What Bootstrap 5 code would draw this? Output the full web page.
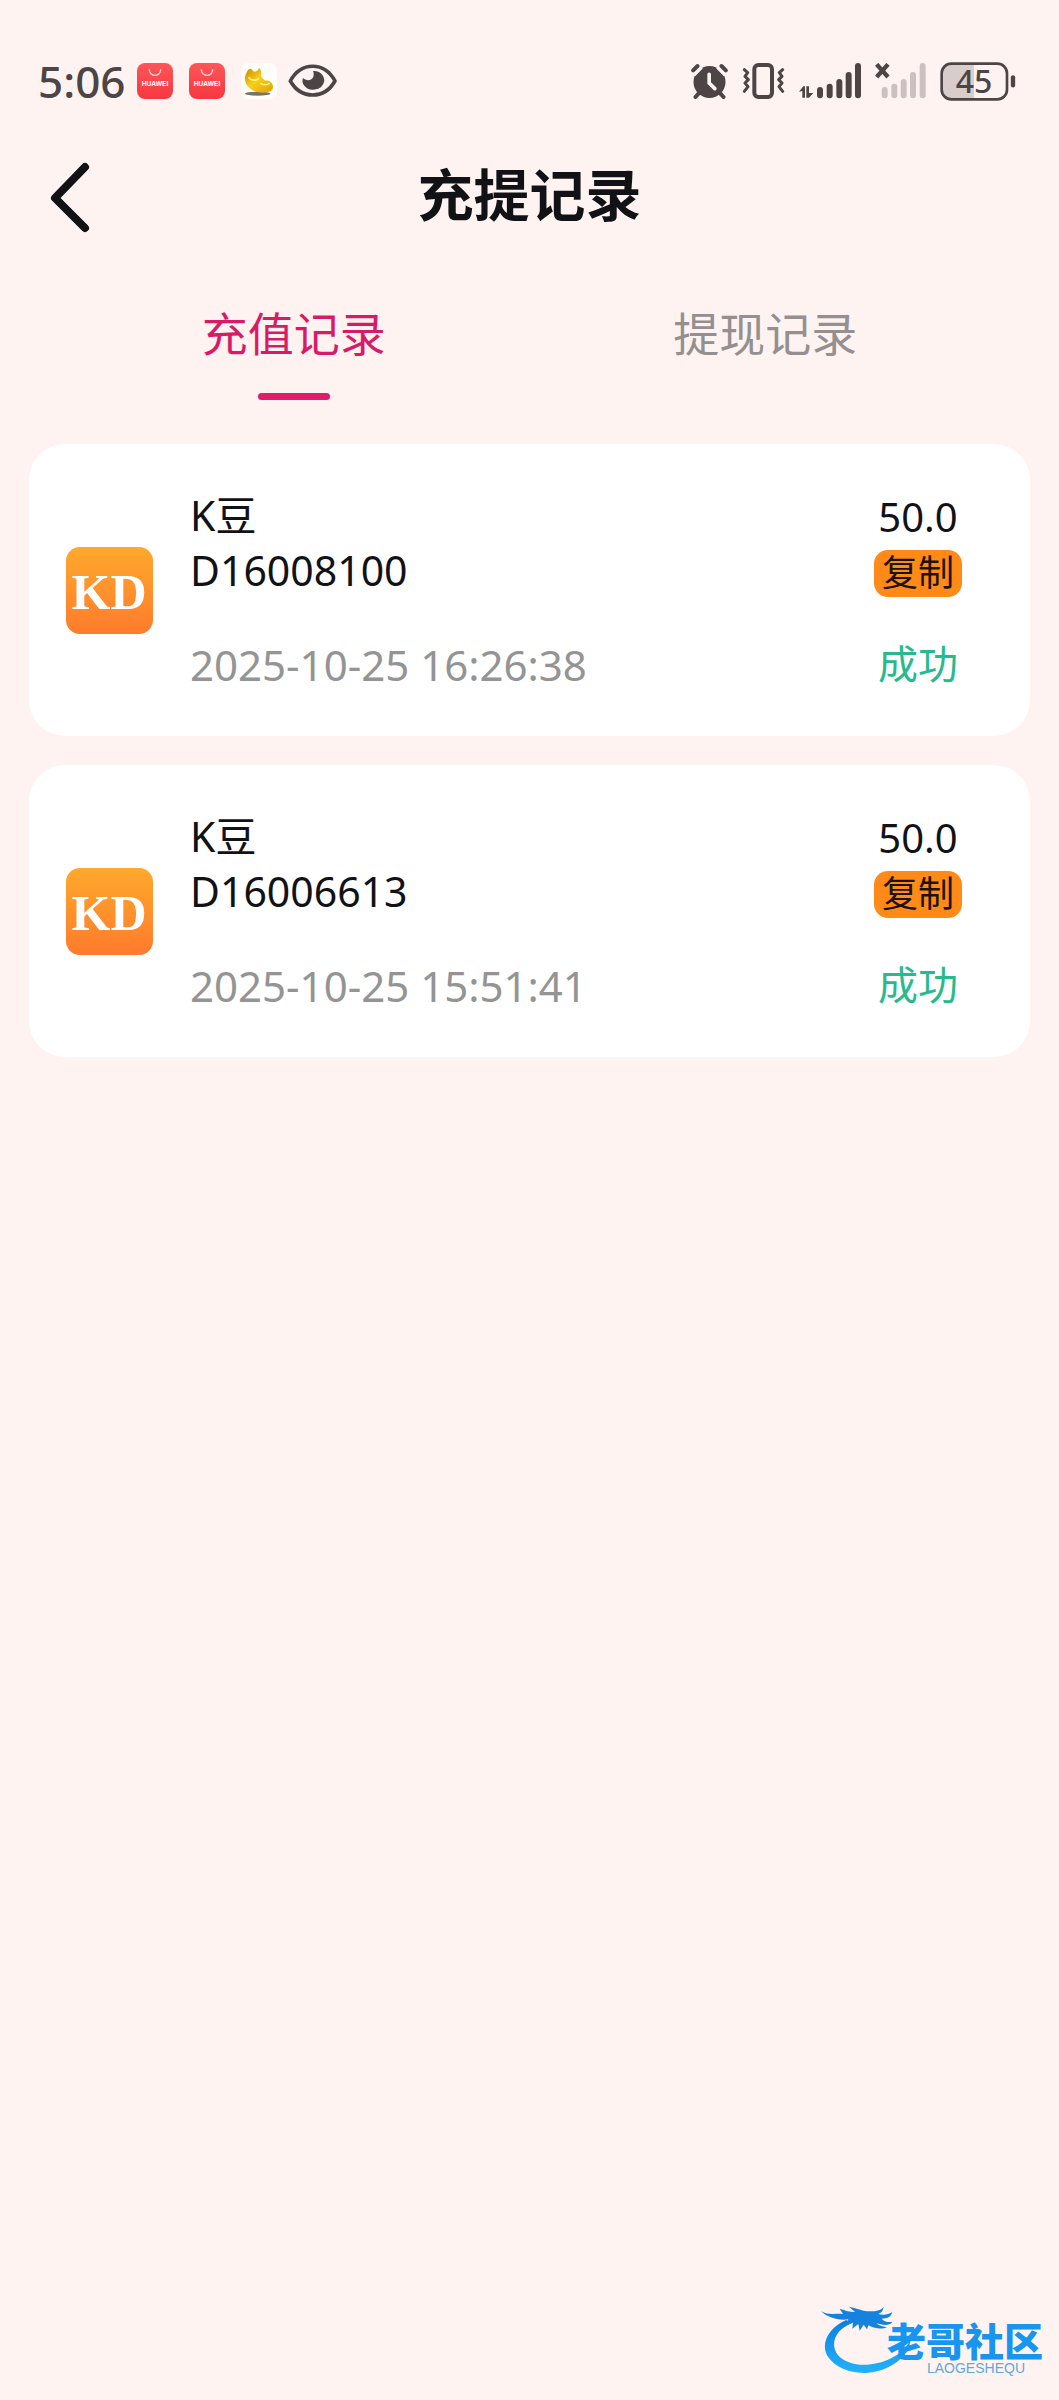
<!DOCTYPE html>
<html lang="zh-CN">
<head>
<meta charset="utf-8">
<meta name="viewport" content="width=device-width, initial-scale=1">
<title>充提记录</title>
<link href="https://cdn.jsdelivr.net/npm/bootstrap@5.3.0/dist/css/bootstrap.min.css" rel="stylesheet">
<style>
body{background:#fff3f2;color:#111216;font-family:"Noto Sans","Noto Sans CJK SC",sans-serif;font-size:41px;line-height:55px}
svg{display:block;flex:none}
.statusbar{padding:57px 43px 0 38px;height:105px;color:#4d4545}
.clock{font-size:44px;font-weight:500;line-height:48px;margin-right:12px}
.app-ico{margin-right:16px}
.signals{gap:14px}
.level{font-size:32px;font-weight:500;line-height:38px;width:68px}
.topbar{height:184px;padding:0 48px}
.topbar h1{font-size:56px;line-height:64px;padding-bottom:10px;font-weight:700;font-family:"Noto Sans CJK SC",sans-serif}
.back{width:44px;color:#111216}
.tabs{padding:0 58px;margin-bottom:44px}
.tabs .nav-link{padding:0;color:#949090;font:400 46px/84px "Noto Sans CJK SC",sans-serif}
.tabs .nav-link::after{content:"";display:block;width:72px;height:7px;margin:20px auto 0;border-radius:4px}
.tabs .nav-link.active{color:#d81b66}
.tabs .nav-link.active::after{background:#e01b6c}
.records{gap:29px;padding:0 29px}
.record{border:0;border-radius:36px;padding:44px 37px}
.record-body{gap:37px}
.when{color:#949494;margin-top:39px;font-size:42px}
.side{margin-right:31px}
.amount{font-size:40px}
.copy{display:block;height:47px;margin:6px 0 2px;padding:0 8px;border:0;border-radius:14px;background:#ff8a17;color:#1c1208;font-family:"Noto Sans CJK SC",sans-serif;font-size:36px;line-height:40px}
.copy span{display:block;height:47px}
.state{color:#27ba8d;margin-top:39px;font-size:40px}
.brand{padding:0 16px 24px 0}
.brand-text{margin-left:-24px;color:#1795ef;line-height:42px;font-size:39px;font-weight:900;font-family:"Noto Sans CJK SC",sans-serif}
.brand-sub{color:#5fa9d6;font:400 14px/16px "Liberation Sans",sans-serif;padding-right:18px}
</style>
</head>
<body>
<svg width="0" height="0" class="position-absolute" aria-hidden="true">
  <defs>
    <linearGradient id="red" x2="0" y2="1"><stop stop-color="#ff5659"/><stop offset="1" stop-color="#f5383f"/></linearGradient>
    <linearGradient id="orange" x2="0" y2="1"><stop stop-color="#ffa92d"/><stop offset="1" stop-color="#ff7b2c"/></linearGradient>
    <linearGradient id="gold" x2="1" y2="1"><stop stop-color="#c98a00"/><stop offset=".45" stop-color="#f6cf1c"/><stop offset="1" stop-color="#e0a300"/></linearGradient>
    <linearGradient id="blue" x2="0" y2="1"><stop stop-color="#0d7fe0"/><stop offset="1" stop-color="#22b2fb"/></linearGradient>
    <symbol id="store" viewBox="0 0 108 108"><rect width="108" height="108" rx="24" fill="url(#red)"/><path d="M37 20a17 17 0 0 0 34 0" fill="none" stroke="#ffd3d3" stroke-width="4" stroke-linecap="round"/><text x="54" y="70" text-anchor="middle" font-family="Liberation Sans" font-weight="700" font-size="20" fill="#fff">HUAWEI</text></symbol>
    <symbol id="kd" viewBox="0 0 87 87"><rect width="87" height="87" rx="14" fill="url(#orange)"/><text x="43" y="62" text-anchor="middle" font-family="Liberation Serif" font-weight="700" font-size="50" fill="#fff">KD</text></symbol>
  </defs>
</svg>
<div class="d-flex flex-column min-vh-100">
  <div class="statusbar d-flex align-items-center justify-content-between">
    <div class="d-flex align-items-center">
      <span class="clock">5:06</span>
      <svg class="app-ico" width="36" height="36"><use href="#store"/></svg>
      <svg class="app-ico" width="36" height="36"><use href="#store"/></svg>
      <svg width="36" height="36" viewBox="0 0 108 108"><rect width="108" height="108" rx="24" fill="#fffdfa"/><ellipse cx="50" cy="92" rx="38" ry="6" fill="#77736c"/><path d="M18 26c4-8 10-11 14-7 3 5 8 9 14 6 5-2 6-9 9-9 6 4 6 14 5 22 4 6 8 12 13 15 8-2 16 2 21 10 4 8 2 18-5 22-14 5-34 6-48 0C24 77 10 62 12 44c1-8 3-13 6-18z" fill="url(#gold)"/><path d="M24 44c6 8 18 10 28 4M60 62c8 4 16 4 24 0" fill="none" stroke="#fff07a" stroke-width="5" stroke-linecap="round"/></svg>
      <svg class="ms-2" width="54" height="36" viewBox="0 0 162 108"><path d="M16 54C48-5 118-5 150 54 118 110 48 110 16 54z" fill="none" stroke="currentColor" stroke-width="11" stroke-linejoin="round"/><path d="M84 24c20-2 34 12 34 30a34 32 0 0 1-64 8c-2-5-2-11 0-17 10 10 27 8 31-4 2-7 1-12-1-17z" fill="currentColor"/></svg>
    </div>
    <div class="signals d-flex align-items-center">
      <svg width="37" height="36" viewBox="0 0 110 108"><circle cx="55" cy="57" r="48" fill="currentColor"/><path d="M4 32 27 9M106 32 83 9" stroke="#fff3f2" stroke-width="22"/><path d="M6 22 19 9M104 22 91 9M22 92 13 102M88 92l9 10" stroke="currentColor" stroke-width="12" stroke-linecap="round"/><path d="M54 34v26l17 17" fill="none" stroke="#fff3f2" stroke-width="11" stroke-linecap="round"/></svg>
      <svg width="43" height="36" viewBox="0 0 129 108"><rect x="37" y="6" width="53" height="96" rx="12" fill="none" stroke="currentColor" stroke-width="12"/><path d="m7 20 10 9-8 11 10 10-10 10 9 11-11 14M122 20l-10 9 8 11-10 10 10 10-9 11 11 14" fill="none" stroke="currentColor" stroke-width="9" stroke-linejoin="round" stroke-linecap="round"/></svg>
      <svg width="62" height="36" viewBox="0 0 186 108"><path d="M63 81v16M92 71v26M121 57v40M149 36v61M177 9v88" stroke="currentColor" stroke-width="18" stroke-linecap="round"/><path d="M0 86 13 70h5v34h-8V84zM22 70h8v20h13L30 104h-8z" fill="currentColor"/></svg>
      <svg width="51" height="36" viewBox="0 0 153 108"><path d="M29 81v16M58 71v26M86 57v40M114 36v61M143 9v88" stroke="#ccc1c0" stroke-width="18" stroke-linecap="round"/><path d="m5 4 34 38M39 4 5 42" stroke="currentColor" stroke-width="13"/></svg>
      <div class="position-relative">
        <svg width="76" height="39" viewBox="0 0 228 117"><path d="M30 6h72v105H30Q6 108 6 82V34Q6 8 30 6z" fill="#d8cdcc"/><rect x="5" y="5" width="196" height="107" rx="29" fill="none" stroke="currentColor" stroke-width="8"/><path d="M219 46v24" stroke="currentColor" stroke-width="13" stroke-linecap="round"/></svg>
        <span class="level position-absolute top-0 start-0 text-center">45</span>
      </div>
    </div>
  </div>

  <header class="topbar d-flex align-items-center">
    <a class="back" href="#" aria-label="返回"><svg width="44" height="72" viewBox="0 0 44 72"><path d="M37 6 7 37l30 30" fill="none" stroke="currentColor" stroke-width="8" stroke-linecap="round" stroke-linejoin="round"/></svg></a>
    <h1 class="flex-fill text-center m-0">充提记录</h1>
    <span class="back"></span>
  </header>

  <nav class="tabs nav nav-justified">
    <a class="nav-link active" href="#" aria-current="page">充值记录</a>
    <a class="nav-link" href="#">提现记录</a>
  </nav>

  <main class="records d-flex flex-column">
    <article class="record card">
      <div class="record-body d-flex align-items-center">
        <svg width="87" height="87" role="img" aria-label="KD"><use href="#kd"/></svg>
        <div class="flex-fill">
          <div>K豆</div>
          <div>D16008100</div>
          <div class="when">2025-10-25 16:26:38</div>
        </div>
        <div class="side text-center">
          <div class="amount">50.0</div>
          <button class="copy" type="button"><span>复制</span></button>
          <div class="state">成功</div>
        </div>
      </div>
    </article>
    <article class="record card">
      <div class="record-body d-flex align-items-center">
        <svg width="87" height="87" role="img" aria-label="KD"><use href="#kd"/></svg>
        <div class="flex-fill">
          <div>K豆</div>
          <div>D16006613</div>
          <div class="when">2025-10-25 15:51:41</div>
        </div>
        <div class="side text-center">
          <div class="amount">50.0</div>
          <button class="copy" type="button"><span>复制</span></button>
          <div class="state">成功</div>
        </div>
      </div>
    </article>
  </main>

  <footer class="brand d-flex align-items-end justify-content-end mt-auto">
    <svg width="90" height="70" viewBox="0 0 270 210"><path d="M75 42C20 66-4 118 22 154c46 66 184 66 242-26l4-26c-36 74-170 100-218 44C24 110 48 68 92 52z" fill="url(#blue)"/><path d="M0 16c20 12 42 6 66 8L56 8c20 6 30 10 46 10L84 2c26 6 44 14 62 14 24 0 34-4 42-14-2 14-8 18-16 22 16 4 28 2 42-6-4 16-16 20-32 20 8 10 20 10 32 10-10 14-34 8-48 4 10 8 20 10 32 12-18 8-42 2-56-6l-4 12-10-14-12 18-4-20-18 14 2-18-24 6 10-16C50 44 18 34 0 16z" fill="#1583dd"/></svg>
    <div class="text-end">
      <div class="brand-text">老哥社区</div>
      <div class="brand-sub">LAOGESHEQU</div>
    </div>
  </footer>
</div>
<script src="https://cdn.jsdelivr.net/npm/bootstrap@5.3.0/dist/js/bootstrap.bundle.min.js"></script>
</body>
</html>
